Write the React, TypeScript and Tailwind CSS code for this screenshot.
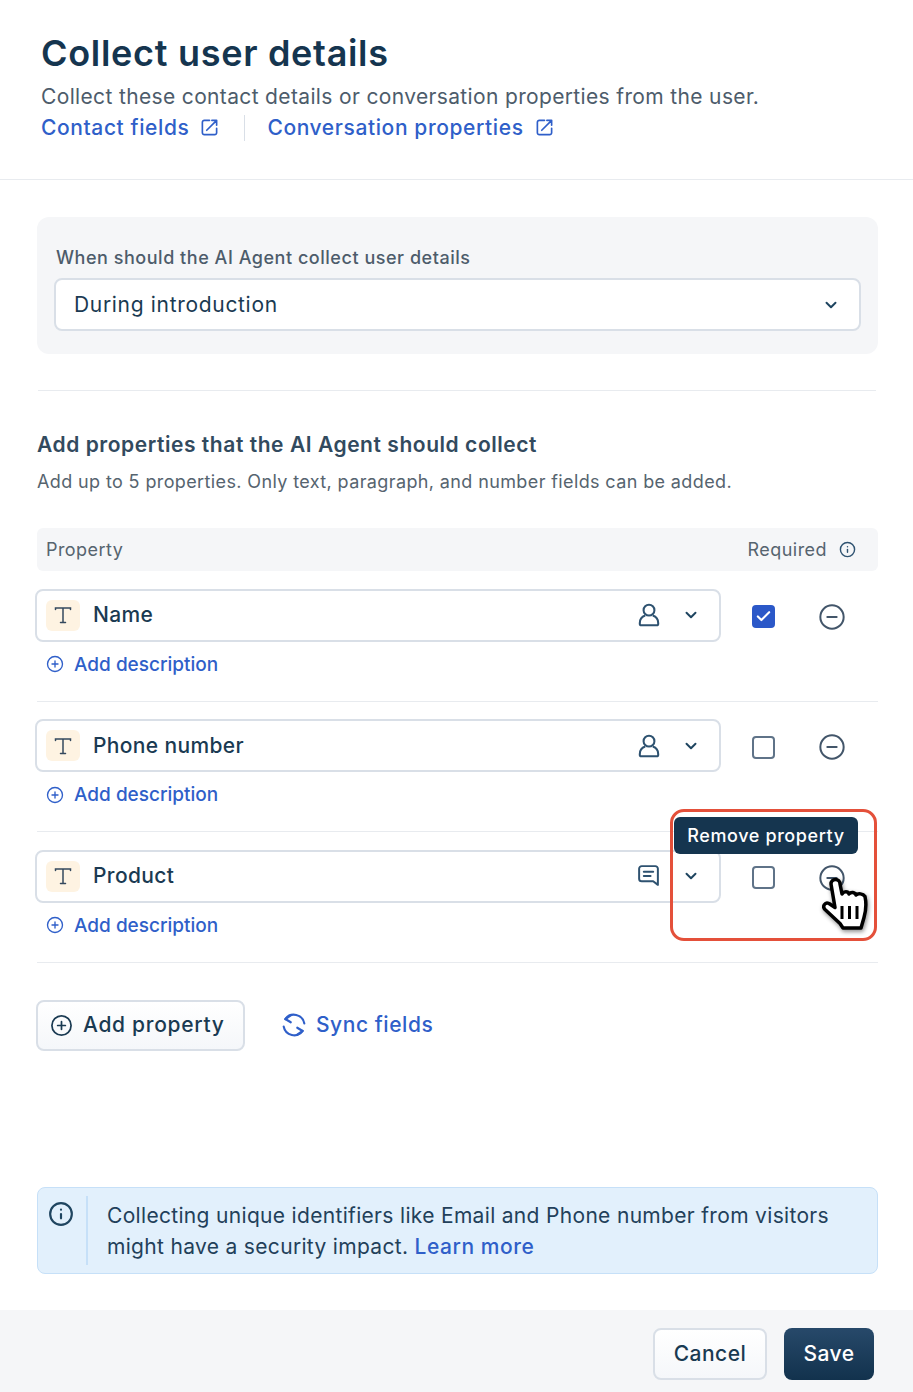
import React from "react";
import { ChevronDown, CirclePlus, CircleMinus, Check, Info } from "lucide-react";

const TypeIcon = () => (
  <div className="w-[34px] h-[31px] rounded-md bg-[#fef3e2] flex items-center justify-center shrink-0">
    <svg width="20" height="20" viewBox="0 0 20 20" fill="none" stroke="#34495e" strokeWidth="1.5" strokeLinecap="round">
      <path d="M2.5 4.5V3h15v1.500M10 3v14.500M7.500 17.500h5" />
    </svg>
  </div>
);

const UserIcon = () => (
  <svg width="26" height="26" viewBox="0 0 24 24" fill="none" stroke="#2e5270" strokeWidth="1.9" className="mr-[20px] shrink-0">
    <circle cx="12" cy="7.500" r="5" />
    <path d="M8.500 12.500C5.500 13.500 3.500 16 3.500 19.500V20a1.500 1.500 0 0 0 1.500 1.500h14a1.500 1.500 0 0 0 1.500-1.500v-.5c0-3.500-2-6-5-7" />
  </svg>
);

const ChatIcon = () => (
  <svg width="25" height="25" viewBox="0 0 24 24" fill="none" stroke="#2e5270" strokeWidth="1.9" strokeLinejoin="round" strokeLinecap="round" className="mr-[21px] mb-[2px] shrink-0">
    <path d="M5.500 3h13A2.500 2.500 0 0 1 21 5.500V21l-4.500-3.500h-11A2.500 2.500 0 0 1 3 15V5.500A2.500 2.500 0 0 1 5.500 3z" />
    <path d="M7.500 8.500h9M7.500 12.500h6.500" />
  </svg>
);

const ExternalIcon = () => (
  <svg width="19" height="19" viewBox="0 0 24 24" fill="none" stroke="#2f5fc9" strokeWidth="2.1" strokeLinecap="round" strokeLinejoin="round" className="ml-[11px] shrink-0">
    <path d="M12 3H5.500A2.500 2.500 0 0 0 3 5.500v13A2.500 2.500 0 0 0 5.500 21h13a2.500 2.500 0 0 0 2.500-2.500V13" />
    <path d="M8.500 15.500 21 3M15 3h6v6" />
  </svg>
);

const SyncIcon = () => (
  <svg width="26" height="26" viewBox="0 0 24 24" fill="none" stroke="#2f5fc9" strokeWidth="2" strokeLinecap="round" strokeLinejoin="round" className="ml-[36px] shrink-0">
    <path d="M21.500 10.500A9.800 9.800 0 0 0 4 6.500" />
    <path d="M9 3 4 6.500 9 9.500" />
    <path d="M2.500 13.500A9.800 9.800 0 0 0 20 17.500" />
    <path d="M15 21 20 17.500 15 14.500" />
  </svg>
);

interface RowProps {
  name: string;
  chat?: boolean;
  required?: boolean;
}

const PropertyRow: React.FC<RowProps> = ({ name, chat, required }) => (
  <div className="border-b border-[#e8ebef] h-[130.5px] pt-[17.5px]">
    <div className="flex items-center ml-[-2px]">
      <div className="w-[686px] h-[53px] bg-white border-2 border-[#d9dfe7] rounded-lg flex items-center pl-[9px] pr-[19px]">
        <TypeIcon />
        <span className="ml-[13px] text-[21px] font-medium tracking-[0.35px] text-[#1a3a52] flex-1">{name}</span>
        {chat ? <ChatIcon /> : <UserIcon />}
        <ChevronDown className="w-[18px] h-[18px] text-[#1f4560]" strokeWidth={2.6} />
      </div>
      {required ? (
        <div className="ml-[31px] w-[23px] h-[23px] rounded-[4px] bg-[#2b58c8] flex items-center justify-center mt-[3px]">
          <Check className="w-[17px] h-[17px] text-white" strokeWidth={3} />
        </div>
      ) : (
        <div className="ml-[31px] w-[23px] h-[23px] rounded-[4px] bg-white border-2 border-[#5f7388] mt-[3px]" />
      )}
      <CircleMinus className="ml-[43px] w-[28px] h-[28px] text-[#43566a] mt-[3px]" strokeWidth={1.7} />
    </div>
    <div className="flex items-center mt-[11px] ml-[9px] text-[#2f5fc9]">
      <CirclePlus className="w-[18px] h-[18px]" strokeWidth={1.8} />
      <span className="ml-[10px] text-[19px] font-medium leading-[23px]">Add description</span>
    </div>
  </div>
);

const HandCursor = () => (
  <svg width="50" height="56" viewBox="0 0 50 56" className="absolute left-[820px] top-[876px] drop-shadow-[1px_2px_2px_rgba(0,0,0,0.45)]">
    <path
      d="M11 8a4.500 4.500 0 0 1 9 0l2 10c2-3 6-3 7 0 2-2.500 6-2 7 1 2-2 7-1.500 9 1.500 1.500 7 1 14-1 21l-3 10.500H23l-3-4.500-15-14c-3-3 0-8 4-6l6 4z"
      fill="white"
      stroke="black"
      strokeWidth="3.500"
      strokeLinejoin="round"
    />
    <path d="M22 30v13M29.500 30v13M37 30v13" stroke="black" strokeWidth="3" />
  </svg>
);

export default function App() {
  return (
    <div className="relative w-[913px] h-[1392px] bg-white flex flex-col font-['Inter',sans-serif] text-[#1a3a52] overflow-hidden">
      <div className="h-[180px] shrink-0 border-b border-[#e8ebef] pl-[41px] pt-[31px]">
        <h1 className="text-[36px] leading-[44px] font-semibold tracking-[0.7px] text-[#15354f]">Collect user details</h1>
        <p className="mt-[8px] text-[21px] leading-[27px] tracking-[0.35px] text-[#4d5c6b]">Collect these contact details or conversation properties from the user.</p>
        <div className="flex items-center mt-[4px] text-[#2f5fc9] text-[21px] font-medium leading-[27px] tracking-[0.6px]">
          <span>Contact fields</span>
          <ExternalIcon />
          <div className="w-px h-[26px] bg-[#d9dfe7] ml-[25px] mr-[22px]" />
          <span>Conversation properties</span>
          <ExternalIcon />
        </div>
      </div>

      <div className="flex-1 px-[37px] pt-[37px]">
        <div className="h-[137px] w-[841px] rounded-xl bg-[#f5f6f8] px-[17px] pt-[28px]">
          <div className="text-[18px] leading-[26px] font-medium tracking-[0.53px] text-[#4d5c6b] ml-[2px]">When should the AI Agent collect user details</div>
          <div className="mt-[7px] h-[53px] bg-white border-2 border-[#d9dfe7] rounded-lg flex items-center pl-[18px] pr-[19px]">
            <span className="flex-1 text-[21px] tracking-[0.68px] text-[#1a3a52]">During introduction</span>
            <ChevronDown className="w-[18px] h-[18px] text-[#1f4560]" strokeWidth={2.6} />
          </div>
        </div>

        <div className="mt-[36px] ml-px w-[838px] border-t border-[#e8ebef]" />

        <h2 className="mt-[41px] text-[21px] leading-[26px] font-semibold tracking-[0.55px] text-[#324a5e]">Add properties that the AI Agent should collect</h2>
        <p className="mt-[12px] text-[18px] leading-[24px] tracking-[0.38px] text-[#56646f]">Add up to 5 properties. Only text, paragraph, and number fields can be added.</p>

        <div className="mt-[34px] w-[841px] h-[43px] bg-[#f5f6f8] rounded-md flex items-center pl-[9px] pr-[22px] text-[18px] tracking-[0.45px] text-[#56646f]">
          <span className="flex-1">Property</span>
          <span>Required</span>
          <Info className="ml-[12px] w-[17px] h-[17px] text-[#2e5270]" strokeWidth={2} />
        </div>

        <div className="w-[841px]">
          <PropertyRow name="Name" required />
          <PropertyRow name="Phone number" />
          <PropertyRow name="Product" chat />
        </div>

        <div className="flex items-center mt-[37px]">
          <div className="ml-[-1px] w-[209px] h-[51px] rounded-lg border-2 border-[#d9dfe7] bg-gradient-to-b from-white to-[#f5f7fa] flex items-center pl-[12px]">
            <CirclePlus className="w-[23px] h-[23px] text-[#1a3a52]" strokeWidth={1.8} />
            <span className="ml-[10px] text-[21px] font-medium tracking-[0.7px]">Add property</span>
          </div>
          <SyncIcon />
          <span className="ml-[9px] text-[21px] font-medium tracking-[0.55px] text-[#2f5fc9]">Sync fields</span>
        </div>

        <div className="mt-[136px] w-[841px] h-[87px] rounded-lg bg-[#e2f0fc] border-[1.5px] border-[#c6e0f8] flex items-center pl-[10px]">
          <Info className="w-[26px] h-[26px] text-[#1f4560] self-start mt-[13px]" strokeWidth={2} />
          <div className="w-[2px] h-[69px] bg-[#c6e0f8] ml-[12px] mr-[18px]" />
          <p className="ml-px mt-[2px] text-[21px] leading-[31px] tracking-[0.32px] text-[#22405a]">
            Collecting unique identifiers like Email and Phone number from visitors
            <br />
            might have a security impact. <span className="font-medium tracking-[0.55px] text-[#2f5fc9]">Learn more</span>
          </p>
        </div>
      </div>

      <div className="h-[82px] shrink-0 bg-[#f5f6f8] flex items-start justify-end pt-[18px] pr-[39px] gap-[17px]">
        <div className="w-[114px] h-[52px] rounded-lg border-2 border-[#d9dfe7] bg-gradient-to-b from-white to-[#f5f7fa] flex items-center justify-center text-[21px] font-medium tracking-[0.5px] text-[#1a3a52]">Cancel</div>
        <div className="w-[90px] h-[52px] rounded-lg bg-gradient-to-b from-[#27496a] to-[#12324d] flex items-center justify-center text-[21px] font-medium tracking-[0.4px] text-white">Save</div>
      </div>

      <div className="absolute left-[670px] top-[809px] w-[207px] h-[132px] rounded-[14px] border-[3px] border-[#e4503a]" />
      <div className="absolute left-[674px] top-[817px] w-[184px] h-[37px] rounded-md bg-[#15354f] flex items-center justify-center text-[18px] font-medium tracking-[0.6px] text-white">Remove property</div>
      <HandCursor />
    </div>
  );
}
